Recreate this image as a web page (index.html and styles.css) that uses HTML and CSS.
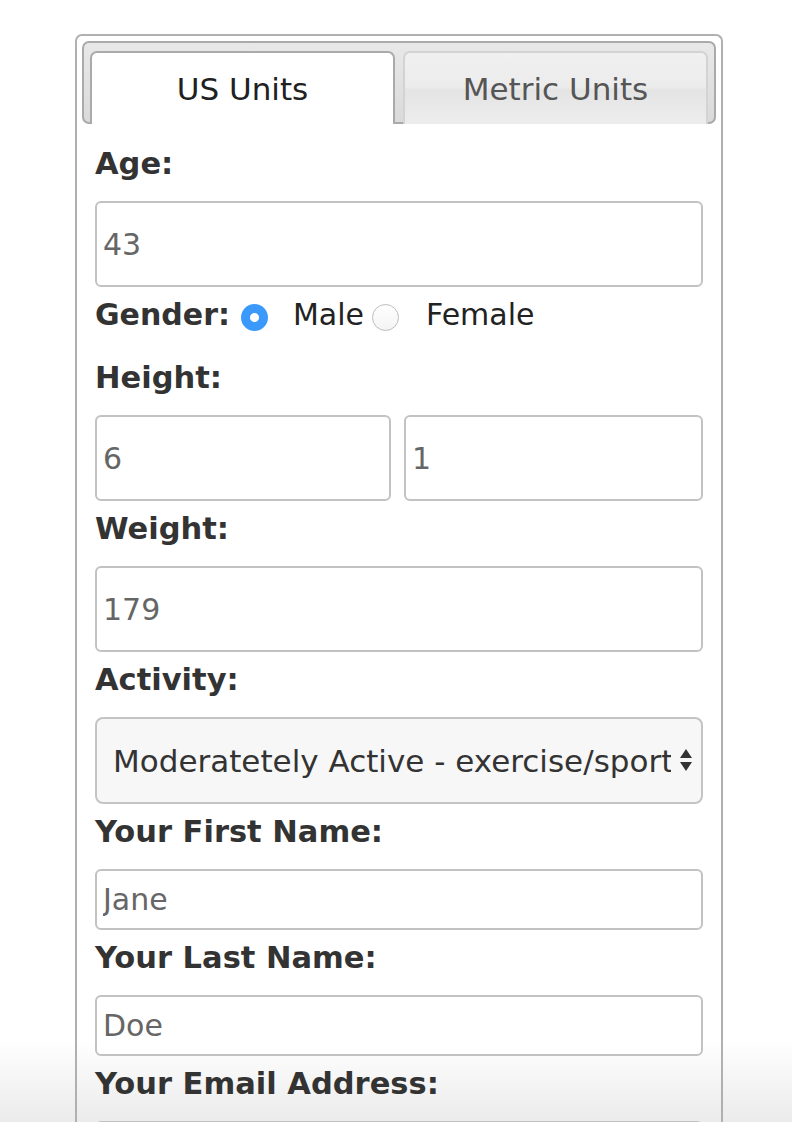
FILE: index.html
```html
<!DOCTYPE html>
<html lang="en">
<head>
<meta charset="utf-8">
<title>Calculator</title>
<link rel="stylesheet" href="styles.css">
</head>
<body>
<div class="panel">
  <div class="tabbar">
    <div class="tab tab-active">US Units</div>
    <div class="tab tab-inactive">Metric Units</div>
  </div>
  <form class="form">
    <div class="label">Age:</div>
    <input class="field field-tall" type="text" value="43">

    <div class="gender-row">
      <span class="label-inline">Gender:</span>
      <input class="radio radio-male" type="radio" name="g" checked>
      <span class="opt opt-male">Male</span>
      <input class="radio radio-female" type="radio" name="g">
      <span class="opt opt-female">Female</span>
    </div>

    <div class="label">Height:</div>
    <div class="pair">
      <input class="field field-tall field-ft" type="text" value="6">
      <input class="field field-tall field-in" type="text" value="1">
    </div>

    <div class="label">Weight:</div>
    <input class="field field-tall" type="text" value="179">

    <div class="label">Activity:</div>
    <div class="select-wrap">
      <select class="select">
        <option>Moderatetely Active - exercise/sport</option>
      </select>
      <svg class="select-arrows" width="14" height="26" viewBox="0 0 14 26">
        <path d="M7 2 L13 11 L1 11 Z" fill="#333"/>
        <path d="M1 15 L13 15 L7 24 Z" fill="#333"/>
      </svg>
    </div>

    <div class="label">Your First Name:</div>
    <input class="field field-short" type="text" value="Jane">

    <div class="label">Your Last Name:</div>
    <input class="field field-short" type="text" value="Doe">

    <div class="label">Your Email Address:</div>
    <input class="field field-short" type="text" value="">
  </form>
</div>
</body>
</html>
```

FILE: styles.css
```css
html {
  margin: 0;
  padding: 0;
  background: #ffffff;
  overflow: hidden;
}

body {
  margin: 0;
  padding: 0;
  height: 1122px;
  overflow: hidden;
  font-family: "DejaVu Sans", Verdana, sans-serif;
  color: #333333;
  background: linear-gradient(to bottom, #ffffff 0, #ffffff 1040px, #ebebeb 1122px);
}

.panel {
  margin: 34px 0 0 75px;
  width: 634px;
  border: 2px solid #b0b0b0;
  border-bottom: none;
  border-radius: 7px 7px 0 0;
  padding: 5px 5px 0 5px;
}

.tabbar {
  display: flex;
  gap: 8px;
  height: 71px;
  padding: 8px 6px 0 6px;
  border: 2px solid #aaaaaa;
  border-radius: 7px;
  background: linear-gradient(#e8e8e8, #dadada);
  width: 618px;
}

.tab {
  width: 301px;
  height: 71px;
  display: flex;
  align-items: center;
  justify-content: center;
  font-size: 31px;
  border-radius: 7px 7px 0 0;
  border: 2px solid #aaaaaa;
  border-bottom: none;
}

.tab-active {
  background: #ffffff;
  color: #212121;
}

.tab-inactive {
  border-color: #d3d3d3;
  color: #555555;
  background: linear-gradient(#f0f0f0 0%, #ececec 48%, #e4e4e4 52%, #ededed 100%);
}

.form {
  padding: 22px 13px 0 13px;
  display: flex;
  flex-direction: column;
}

.label {
  font-size: 30.5px;
  font-weight: bold;
  line-height: 35px;
  height: 35px;
  margin-bottom: 20px;
  color: #333333;
  white-space: nowrap;
}

.field {
  box-sizing: border-box;
  width: 608px;
  margin: 0 0 10px 0;
  border: 2px solid #c2c2c2;
  border-radius: 6px;
  padding: 0 0 0 6px;
  font-family: "DejaVu Sans", Verdana, sans-serif;
  font-size: 30px;
  color: #666666;
  background: #ffffff;
  outline: none;
}

.field-tall {
  height: 86px;
}

.field-short {
  height: 61px;
}

.pair {
  display: flex;
  gap: 13px;
}

.pair .field-ft {
  width: 296px;
}

.pair .field-in {
  width: 299px;
}

.gender-row {
  display: flex;
  align-items: center;
  height: 35px;
  margin-bottom: 28px;
}

.label-inline {
  font-size: 30px;
  font-weight: bold;
  color: #333333;
}

.radio {
  appearance: none;
  -webkit-appearance: none;
  width: 27px;
  height: 27px;
  margin: 5px 0 0 0;
  border-radius: 50%;
  box-sizing: border-box;
}

.radio-male {
  margin-left: 11px;
  background: radial-gradient(circle, #ffffff 0 4px, #3b99fc 5px);
  border: none;
}

.radio-female {
  margin-left: 8px;
  background: linear-gradient(#ffffff, #f4f4f4);
  border: 1px solid #bdbdbd;
}

.opt {
  font-size: 30px;
  color: #222222;
}

.opt-male {
  margin-left: 25px;
}

.opt-female {
  margin-left: 27px;
}

.select-wrap {
  position: relative;
  width: 608px;
  margin-bottom: 10px;
}

.select {
  appearance: none;
  -webkit-appearance: none;
  box-sizing: border-box;
  width: 608px;
  height: 87px;
  border: 2px solid #c4c4c4;
  border-radius: 8px;
  background: #f7f7f7;
  padding: 0 30px 0 16px;
  font-family: "DejaVu Sans", Verdana, sans-serif;
  font-size: 31px;
  color: #333333;
  white-space: nowrap;
  outline: none;
}

.select-arrows {
  position: absolute;
  right: 10px;
  top: 30px;
}
```
